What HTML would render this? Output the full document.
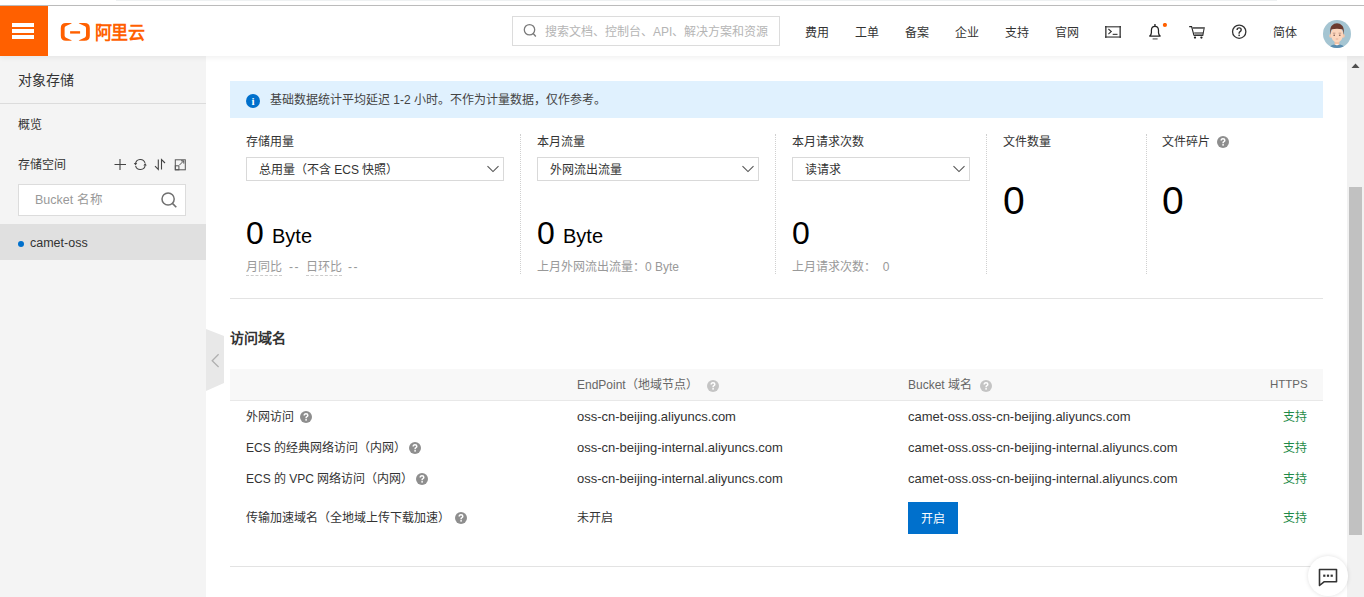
<!DOCTYPE html>
<html lang="zh-CN"><head><meta charset="utf-8">
<style>
*{margin:0;padding:0;box-sizing:border-box}
html,body{width:1364px;height:597px;overflow:hidden;background:#fff;font-family:"Liberation Sans",sans-serif;color:#333;font-size:12px}
.a{position:absolute;white-space:nowrap;line-height:1}
#topline{position:absolute;left:0;top:5px;width:1364px;height:1px;background:#bdbdbd}
#header{position:absolute;left:0;top:6px;width:1364px;height:50px;background:#fff;box-shadow:0 2px 5px rgba(0,0,0,.06);z-index:5}
#burger{position:absolute;left:0;top:0;width:48px;height:50px;background:#ff6000}
#burger i{position:absolute;left:12px;width:22px;height:4px;background:#fff}
#side{position:absolute;left:0;top:56px;width:206px;height:541px;background:#f4f4f4}
#main{position:absolute;left:206px;top:56px;width:1141px;height:541px;background:#fff}
#sb{position:absolute;left:1347px;top:56px;width:17px;height:541px;background:#f1f1f1}
.nav{font-size:12px;color:#333}
.sel{position:absolute;height:24px;border:1px solid #d9d9d9;background:#fff}
.sel span{position:absolute;left:12px;top:6px;font-size:12px;color:#333;line-height:1}
.sel svg{position:absolute;right:3px;top:7px}
.vd{position:absolute;width:0;border-left:1px dotted #d0d0d0}
.q{display:inline-block;width:12px;height:12px;border-radius:50%;background:#9b9b9b;color:#fff;font-size:10px;font-weight:bold;text-align:center;line-height:12px;vertical-align:middle}
.qi{position:absolute;width:12px;height:12px;border-radius:50%;background:#9b9b9b;color:#fff;font-size:10px;font-weight:bold;text-align:center;line-height:12px}
.qs{position:absolute}
.grn{color:#1f8a48}
</style></head><body>
<div style="position:absolute;left:116px;top:0;width:1161px;height:1px;background:#eef1f2"></div>
<div id="topline"></div>
<div id="header">
  <div id="burger"><i style="top:17px"></i><i style="top:23px"></i><i style="top:29px"></i></div>
  <!-- logo -->
  <svg style="position:absolute;left:60px;top:16px" width="31" height="20" viewBox="0 0 31 20">
    <path d="M11.9 0.9 H6 Q0.8 0.9 0.8 6 V13.7 Q0.8 18.8 6 18.8 H11.9 L11 18 Q7 16.2 5.6 15.4 Q4.6 14.8 4.6 13.5 V6.2 Q4.6 4.9 5.6 4.3 Q7 3.5 11 1.7 Z" fill="#ff6000"/>
    <path d="M18.7 0.9 H24.6 Q29.8 0.9 29.8 6 V13.7 Q29.8 18.8 24.6 18.8 H18.7 L19.6 18 Q23.6 16.2 25 15.4 Q26 14.8 26 13.5 V6.2 Q26 4.9 25 4.3 Q23.6 3.5 19.6 1.7 Z" fill="#ff6000"/>
    <rect x="10.1" y="9.2" width="10" height="2.4" fill="#ff6000"/>
  </svg>
  <div class="a" style="left:95px;top:18px;font-size:17px;color:#ff6000;font-weight:bold;letter-spacing:-0.7px;transform:scaleY(1.1);transform-origin:0 0">阿里云</div>
  <!-- search -->
  <div style="position:absolute;left:512px;top:10px;width:268px;height:30px;border:1px solid #dcdcdc;background:#fff"></div>
  <svg style="position:absolute;left:523px;top:17px" width="16" height="16" viewBox="0 0 16 16"><circle cx="6.5" cy="6.75" r="5.2" fill="none" stroke="#7a7a7a" stroke-width="1.3"/><path d="M10.2 10.6 L12.8 13.4" stroke="#7a7a7a" stroke-width="1.4"/></svg>
  <div class="a" style="left:545px;top:20px;font-size:12px;color:#b5b5b5">搜索文档、控制台、API、解决方案和资源</div>
  <div class="a nav" style="left:805px;top:21px">费用</div>
  <div class="a nav" style="left:855px;top:21px">工单</div>
  <div class="a nav" style="left:905px;top:21px">备案</div>
  <div class="a nav" style="left:955px;top:21px">企业</div>
  <div class="a nav" style="left:1005px;top:21px">支持</div>
  <div class="a nav" style="left:1055px;top:21px">官网</div>
  <!-- terminal -->
  <svg style="position:absolute;left:1105px;top:20px" width="16" height="12" viewBox="0 0 16 12"><rect x="0" y="0" width="16" height="1.5" fill="#666"/><rect x="0" y="10.3" width="16" height="1.5" fill="#666"/><rect x="0.2" y="0" width="1.3" height="11.8" fill="#333"/><rect x="14.5" y="0" width="1.3" height="11.8" fill="#333"/><path d="M3.4 3 L6.3 5.5 L3.4 8.2" fill="none" stroke="#333" stroke-width="1.1"/><rect x="7.7" y="7.8" width="4.8" height="1.1" fill="#333"/></svg>
  <!-- bell -->
  <svg style="position:absolute;left:1147px;top:17px" width="22" height="18" viewBox="0 0 22 18"><rect x="7.1" y="1" width="1.7" height="2.3" fill="#555"/><path d="M2.7 13 Q4.3 12 4.4 9.6 V7.2 Q4.6 3.4 7.95 3.4 Q11.3 3.4 11.5 7.2 V9.6 Q11.6 12 13.2 13 Z" fill="#fff" stroke="#222" stroke-width="1.25" stroke-linejoin="round"/><rect x="5.6" y="15.2" width="5" height="1.4" fill="#777"/><circle cx="17.9" cy="2" r="2.1" fill="#ff6000"/></svg>
  <!-- cart -->
  <svg style="position:absolute;left:1189px;top:20px" width="16" height="13" viewBox="0 0 16 13"><path d="M0.2 0.6 H2.6 L5 9.6" fill="none" stroke="#222" stroke-width="1.1"/><path d="M5.2 6 H14.6 L13.8 9.5 H5.2 Z" fill="#8a8a8a"/><path d="M3.5 1.9 H15.2 L13.8 9.5 H5" fill="none" stroke="#333" stroke-width="1.1"/><rect x="3.8" y="1.3" width="11.4" height="1.3" fill="#666"/><circle cx="6" cy="11.6" r="1.15" fill="#222"/><circle cx="12.4" cy="11.6" r="1.15" fill="#222"/></svg>
  <!-- help -->
  <svg style="position:absolute;left:1231px;top:18px" width="16" height="16" viewBox="0 0 16 16"><circle cx="8.2" cy="7.7" r="6.65" fill="none" stroke="#333" stroke-width="1.3"/><path d="M6.1 5.9 Q6.1 3.9 8.2 3.9 Q10.2 3.9 10.2 5.7 Q10.2 6.9 9 7.6 Q8.1 8.1 8.1 9.3 V9.7" fill="none" stroke="#333" stroke-width="1.4"/><rect x="7.4" y="10.6" width="1.5" height="1.5" fill="#333"/></svg>
  <div class="a nav" style="left:1273px;top:21px">简体</div>
  <!-- avatar -->
  <svg style="position:absolute;left:1323px;top:14px" width="28" height="28" viewBox="0 0 28 28">
    <defs><clipPath id="cp"><circle cx="14" cy="14" r="14"/></clipPath></defs>
    <circle cx="14" cy="14" r="14" fill="#a5c5d2"/>
    <g clip-path="url(#cp)">
      <path d="M6 28.5 Q7 24.5 14 24 Q21 24.5 22 28.5 Z" fill="#5a8db0"/>
      <rect x="11.6" y="19" width="4.8" height="6" fill="#f3c2a5"/>
      <path d="M12 24.2 H16 L14 25.6Z" fill="#fff"/>
      <ellipse cx="7.6" cy="15.8" rx="1.4" ry="1.9" fill="#f6c7aa"/>
      <ellipse cx="20.4" cy="15.8" rx="1.4" ry="1.9" fill="#f6c7aa"/>
      <ellipse cx="14" cy="14.6" rx="6.2" ry="7.6" fill="#fcd6bd"/>
      <path d="M7.3 15 Q6.6 7.5 9 5.5 Q11 3.2 14 3.2 Q17 3.2 19 5.5 Q21.4 7.5 20.7 15 Q20.2 10 19.2 9.3 Q14 8 8.8 9.3 Q7.8 10 7.3 15Z" fill="#6b3b2f"/>
      <ellipse cx="11.2" cy="15.3" rx="0.9" ry="0.8" fill="#7d5b52"/>
      <ellipse cx="16.8" cy="15.3" rx="0.9" ry="0.8" fill="#7d5b52"/>
      <path d="M9.8 13.2 H12.4 M15.6 13.2 H18.2" stroke="#a07060" stroke-width="0.6"/>
      <path d="M12.8 19 H15.2" stroke="#e0a890" stroke-width="0.8"/>
    </g>
  </svg>
</div>

<div id="side">
  <div class="a" style="left:18px;top:17px;font-size:14px;color:#333">对象存储</div>
  <div style="position:absolute;left:0;top:47px;width:206px;height:1px;background:#dcdcdc"></div>
  <div class="a" style="left:18px;top:63px;font-size:12px;color:#333">概览</div>
  <div class="a" style="left:18px;top:103px;font-size:12px;color:#333">存储空间</div>
  <!-- icons -->
  <svg style="position:absolute;left:108px;top:96px" width="84" height="24" viewBox="0 0 84 24">
    <path d="M6.5 12.5 H18 M12 7 V18" stroke="#444" stroke-width="1.1"/>
    <path d="M27.5 11.6 A4.9 4.9 0 0 1 37 10.9" fill="none" stroke="#444" stroke-width="1.1"/>
    <path d="M37.2 13.2 A4.9 4.9 0 0 1 27.6 13.8" fill="none" stroke="#444" stroke-width="1.1"/>
    <path d="M25.8 11 L27.5 13.5 L29.2 11Z" fill="#444"/>
    <path d="M35.4 13.6 L37.1 11.1 L38.8 13.6Z" fill="#444"/>
    <path d="M50.3 7.5 V17.5 L47 14.2" fill="none" stroke="#444" stroke-width="1.1"/>
    <path d="M53.5 17.5 V7.5 L57 11" fill="none" stroke="#444" stroke-width="1.1"/>
    <rect x="67.3" y="7.8" width="10" height="10" fill="none" stroke="#555" stroke-width="1"/>
    <rect x="67.3" y="13.8" width="3.6" height="4" fill="none" stroke="#555" stroke-width="1"/>
    <path d="M71.5 13 L75.5 9" stroke="#555" stroke-width="1"/><path d="M73 8.8 H75.8 V11.6" fill="none" stroke="#555" stroke-width="1"/>
  </svg>
  <div style="position:absolute;left:18px;top:128px;width:168px;height:32px;border:1px solid #dcdcdc;background:#fff"></div>
  <div class="a" style="left:35px;top:138px;font-size:12.5px;color:#999">Bucket 名称</div>
  <svg style="position:absolute;left:160px;top:136px" width="18" height="18" viewBox="0 0 18 18"><circle cx="8.1" cy="7" r="6.1" fill="none" stroke="#707070" stroke-width="1.5"/><path d="M12.4 11.4 L16.3 15.2" stroke="#707070" stroke-width="1.6"/></svg>
  <div style="position:absolute;left:0;top:168px;width:206px;height:36px;background:#e0e0e0"></div>
  <div style="position:absolute;left:18px;top:185px;width:6px;height:6px;border-radius:50%;background:#0070cc"></div>
  <div class="a" style="left:30px;top:181px;font-size:12.5px;color:#333">camet-oss</div>
</div>

<div id="main">
  <!-- collapse tab -->
  <svg style="position:absolute;left:0;top:273px" width="18" height="62" viewBox="0 0 18 62"><path d="M0 0 L18 7 V54 L0 62Z" fill="#e8e8e8"/><path d="M12.6 25.3 L6.2 31.7 L12.6 38" fill="none" stroke="#b0b0b0" stroke-width="1.3"/></svg>
  <!-- info bar -->
  <div style="position:absolute;left:24px;top:25px;width:1093px;height:37px;background:#e0f1fe"></div>
  <div style="position:absolute;left:40px;top:38px;width:14px;height:14px;border-radius:50%;background:#0070cc"></div>
  <div class="a" style="left:40px;top:38px;width:14px;height:14px;text-align:center;line-height:14px;font-size:11px;font-weight:bold;color:#fff;font-family:'Liberation Serif',serif">i</div>
  <div class="a" style="left:64px;top:38px;font-size:12px;color:#444">基础数据统计平均延迟 1-2 小时。不作为计量数据，仅作参考。</div>
  <!-- stats -->
  <div class="a" style="left:40px;top:80px;font-size:12px;color:#333">存储用量</div>
  <div class="sel" style="left:40px;top:101px;width:258px"><span>总用量（不含 ECS 快照）</span><svg width="14" height="9" viewBox="0 0 14 9"><path d="M1.5 1.2 L7 6.6 L12.5 1.2" fill="none" stroke="#555" stroke-width="1.1"/></svg></div>
  <div class="a" style="left:40px;top:161px;font-size:32px;color:#000">0</div>
  <div class="a" style="left:66px;top:170px;font-size:20px;color:#000">Byte</div>
  <div class="a" style="left:40px;top:205px;font-size:12px;color:#999">月同比</div>
  <div style="position:absolute;left:40px;top:219px;width:36px;border-top:1px dashed #ccc"></div>
  <div class="a" style="left:83px;top:205px;font-size:12px;color:#999;letter-spacing:1.5px">--</div>
  <div class="a" style="left:100px;top:205px;font-size:12px;color:#999">日环比</div>
  <div style="position:absolute;left:100px;top:219px;width:36px;border-top:1px dashed #ccc"></div>
  <div class="a" style="left:142px;top:205px;font-size:12px;color:#999;letter-spacing:1.5px">--</div>
  <div class="vd" style="left:314px;top:78px;height:140px"></div>

  <div class="a" style="left:331px;top:80px;font-size:12px;color:#333">本月流量</div>
  <div class="sel" style="left:331px;top:101px;width:222px"><span>外网流出流量</span><svg width="14" height="9" viewBox="0 0 14 9"><path d="M1.5 1.2 L7 6.6 L12.5 1.2" fill="none" stroke="#555" stroke-width="1.1"/></svg></div>
  <div class="a" style="left:331px;top:161px;font-size:32px;color:#000">0</div>
  <div class="a" style="left:357px;top:170px;font-size:20px;color:#000">Byte</div>
  <div class="a" style="left:331px;top:205px;font-size:12px;color:#999">上月外网流出流量：0 Byte</div>
  <div class="vd" style="left:569px;top:78px;height:140px"></div>

  <div class="a" style="left:586px;top:80px;font-size:12px;color:#333">本月请求次数</div>
  <div class="sel" style="left:586px;top:101px;width:178px"><span>读请求</span><svg width="14" height="9" viewBox="0 0 14 9"><path d="M1.5 1.2 L7 6.6 L12.5 1.2" fill="none" stroke="#555" stroke-width="1.1"/></svg></div>
  <div class="a" style="left:586px;top:161px;font-size:32px;color:#000">0</div>
  <div class="a" style="left:586px;top:205px;font-size:12px;color:#999">上月请求次数：&nbsp; 0</div>
  <div class="vd" style="left:780px;top:78px;height:140px"></div>

  <div class="a" style="left:797px;top:80px;font-size:12px;color:#333">文件数量</div>
  <div class="a" style="left:797px;top:125px;font-size:39px;color:#000">0</div>
  <div class="vd" style="left:940px;top:78px;height:140px"></div>

  <div class="a" style="left:956px;top:80px;font-size:12px;color:#333">文件碎片</div>
  <svg class="qs" style="left:1011px;top:80px" width="12" height="12" viewBox="0 0 12 12"><circle cx="6" cy="6" r="6" fill="#8e8e8e"/><path d="M4.2 4.6 Q4.2 2.7 6 2.7 Q7.8 2.7 7.8 4.3 Q7.8 5.2 6.9 5.7 Q6.1 6.1 6.1 7 V7.3" fill="none" stroke="#fff" stroke-width="1.5"/><rect x="5.3" y="8.1" width="1.6" height="1.5" fill="#fff"/></svg>
  <div class="a" style="left:956px;top:125px;font-size:39px;color:#000">0</div>

  <div style="position:absolute;left:24px;top:242px;width:1093px;height:1px;background:#e3e3e3"></div>

  <!-- access domains -->
  <div class="a" style="left:24px;top:275px;font-size:14px;font-weight:bold;color:#333">访问域名</div>
  <div style="position:absolute;left:24px;top:313px;width:1093px;height:32px;background:#f8f8f8;border-bottom:1px solid #e8e8e8"></div>
  <div class="a" style="left:371px;top:323px;font-size:12px;color:#666">EndPoint（地域节点）</div>
  <svg class="qs" style="left:501px;top:324px" width="12" height="12" viewBox="0 0 12 12"><circle cx="6" cy="6" r="6" fill="#c4c4c4"/><path d="M4.2 4.6 Q4.2 2.7 6 2.7 Q7.8 2.7 7.8 4.3 Q7.8 5.2 6.9 5.7 Q6.1 6.1 6.1 7 V7.3" fill="none" stroke="#fff" stroke-width="1.5"/><rect x="5.3" y="8.1" width="1.6" height="1.5" fill="#fff"/></svg>
  <div class="a" style="left:702px;top:323px;font-size:12px;color:#666">Bucket 域名</div>
  <svg class="qs" style="left:774px;top:324px" width="12" height="12" viewBox="0 0 12 12"><circle cx="6" cy="6" r="6" fill="#c4c4c4"/><path d="M4.2 4.6 Q4.2 2.7 6 2.7 Q7.8 2.7 7.8 4.3 Q7.8 5.2 6.9 5.7 Q6.1 6.1 6.1 7 V7.3" fill="none" stroke="#fff" stroke-width="1.5"/><rect x="5.3" y="8.1" width="1.6" height="1.5" fill="#fff"/></svg>
  <div class="a" style="left:1064px;top:323px;font-size:11.5px;color:#666">HTTPS</div>

  <div class="a" style="left:40px;top:355px;font-size:12px;color:#333">外网访问</div>
  <svg class="qs" style="left:94px;top:355px" width="12" height="12" viewBox="0 0 12 12"><circle cx="6" cy="6" r="6" fill="#8e8e8e"/><path d="M4.2 4.6 Q4.2 2.7 6 2.7 Q7.8 2.7 7.8 4.3 Q7.8 5.2 6.9 5.7 Q6.1 6.1 6.1 7 V7.3" fill="none" stroke="#fff" stroke-width="1.5"/><rect x="5.3" y="8.1" width="1.6" height="1.5" fill="#fff"/></svg>
  <div class="a" style="left:371px;top:354px;font-size:13px;color:#333">oss-cn-beijing.aliyuncs.com</div>
  <div class="a" style="left:702px;top:354px;font-size:13px;color:#333">camet-oss.oss-cn-beijing.aliyuncs.com</div>
  <div class="a grn" style="left:1077px;top:355px;font-size:12px">支持</div>

  <div class="a" style="left:40px;top:386px;font-size:12px;color:#333">ECS 的经典网络访问（内网）</div>
  <svg class="qs" style="left:203px;top:386px" width="12" height="12" viewBox="0 0 12 12"><circle cx="6" cy="6" r="6" fill="#8e8e8e"/><path d="M4.2 4.6 Q4.2 2.7 6 2.7 Q7.8 2.7 7.8 4.3 Q7.8 5.2 6.9 5.7 Q6.1 6.1 6.1 7 V7.3" fill="none" stroke="#fff" stroke-width="1.5"/><rect x="5.3" y="8.1" width="1.6" height="1.5" fill="#fff"/></svg>
  <div class="a" style="left:371px;top:385px;font-size:13px;color:#333">oss-cn-beijing-internal.aliyuncs.com</div>
  <div class="a" style="left:702px;top:385px;font-size:13px;color:#333">camet-oss.oss-cn-beijing-internal.aliyuncs.com</div>
  <div class="a grn" style="left:1077px;top:386px;font-size:12px">支持</div>

  <div class="a" style="left:40px;top:417px;font-size:12px;color:#333">ECS 的 VPC 网络访问（内网）</div>
  <svg class="qs" style="left:210px;top:417px" width="12" height="12" viewBox="0 0 12 12"><circle cx="6" cy="6" r="6" fill="#8e8e8e"/><path d="M4.2 4.6 Q4.2 2.7 6 2.7 Q7.8 2.7 7.8 4.3 Q7.8 5.2 6.9 5.7 Q6.1 6.1 6.1 7 V7.3" fill="none" stroke="#fff" stroke-width="1.5"/><rect x="5.3" y="8.1" width="1.6" height="1.5" fill="#fff"/></svg>
  <div class="a" style="left:371px;top:416px;font-size:13px;color:#333">oss-cn-beijing-internal.aliyuncs.com</div>
  <div class="a" style="left:702px;top:416px;font-size:13px;color:#333">camet-oss.oss-cn-beijing-internal.aliyuncs.com</div>
  <div class="a grn" style="left:1077px;top:417px;font-size:12px">支持</div>

  <div class="a" style="left:40px;top:456px;font-size:12px;color:#333">传输加速域名（全地域上传下载加速）</div>
  <svg class="qs" style="left:249px;top:456px" width="12" height="12" viewBox="0 0 12 12"><circle cx="6" cy="6" r="6" fill="#8e8e8e"/><path d="M4.2 4.6 Q4.2 2.7 6 2.7 Q7.8 2.7 7.8 4.3 Q7.8 5.2 6.9 5.7 Q6.1 6.1 6.1 7 V7.3" fill="none" stroke="#fff" stroke-width="1.5"/><rect x="5.3" y="8.1" width="1.6" height="1.5" fill="#fff"/></svg>
  <div class="a" style="left:371px;top:456px;font-size:12px;color:#333">未开启</div>
  <div style="position:absolute;left:702px;top:446px;width:50px;height:32px;background:#0070cc"></div>
  <div class="a" style="left:702px;top:457px;width:50px;text-align:center;font-size:12px;color:#fff">开启</div>
  <div class="a grn" style="left:1077px;top:456px;font-size:12px">支持</div>

  <div style="position:absolute;left:24px;top:510px;width:1093px;height:1px;background:#e3e3e3"></div>
</div>


<div style="position:absolute;left:1308px;top:556px;width:40px;height:40px;border-radius:50%;background:#fff;box-shadow:0 0 4px rgba(0,0,0,.13);z-index:3"></div>
<svg style="position:absolute;left:1318px;top:568px;z-index:4" width="20" height="19" viewBox="0 0 20 19"><path d="M1.5 1.5 H18.5 V13.8 H6 L1.5 17.5 Z" fill="none" stroke="#333" stroke-width="1.6" stroke-linejoin="round"/><rect x="5.2" y="6.6" width="2.2" height="2.2" fill="#333"/><rect x="8.9" y="6.6" width="2.2" height="2.2" fill="#333"/><rect x="12.6" y="6.6" width="2.2" height="2.2" fill="#333"/></svg>
<div id="sb">
  <svg style="position:absolute;left:3px;top:6px" width="11" height="7" viewBox="0 0 11 7"><path d="M1.5 6 L5.5 1.5 L9.5 6Z" fill="#505050"/></svg>
  <div style="position:absolute;left:2px;top:131px;width:13px;height:348px;background:#c1c1c1"></div>
</div>
</body></html>
